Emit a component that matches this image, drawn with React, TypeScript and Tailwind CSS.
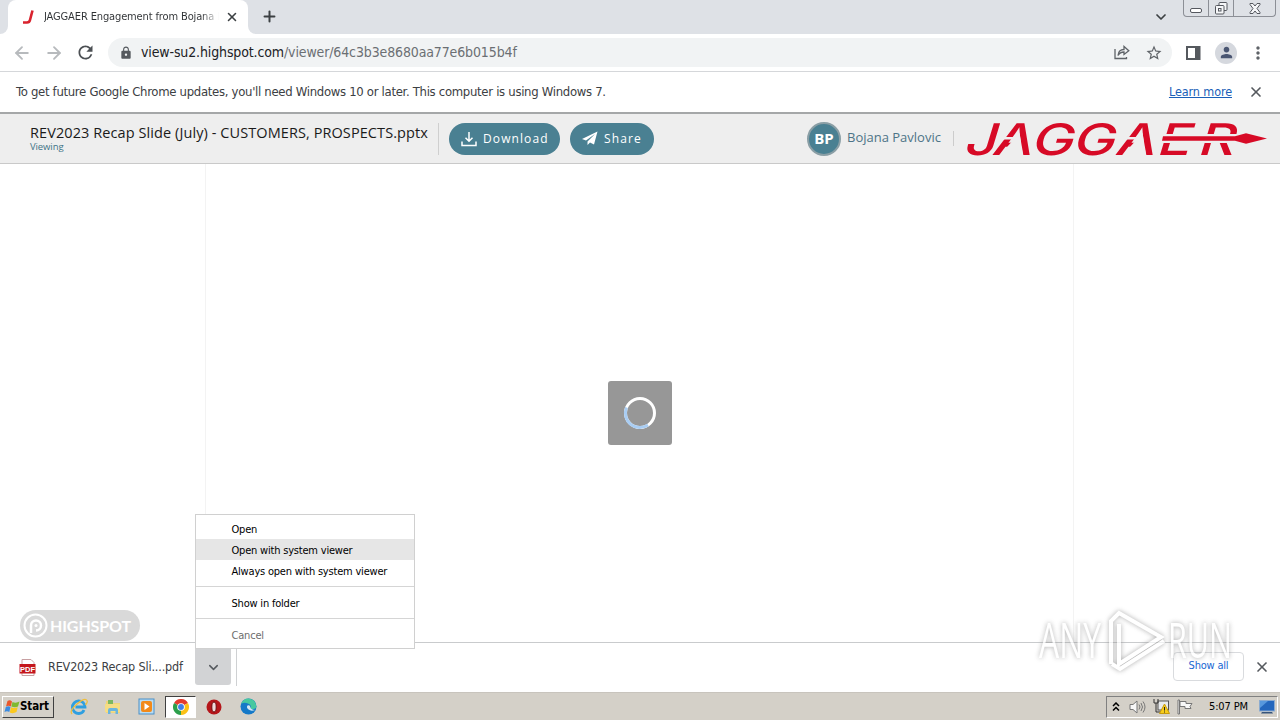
import React from 'react';
import { ChevronDown, X, Plus, ArrowLeft, ArrowRight } from 'lucide-react';
import { MdRefresh, MdLock, MdStarBorder, MdPerson, MdMoreVert } from 'react-icons/md';

// window buttons in the top right corner
const WindowButtons = () => {
  return (
    <div className="flex h-[17px] w-[93px] rounded-b-[4px] border border-t-0 border-[#8c8f96] text-[#4c5058]">
      <div className="flex w-[25px] items-end justify-center border-r border-[#8c8f96] pb-[3px]">
        <div className="h-[5px] w-[12px] rounded-[2px] border border-[#55585f] bg-white"></div>
      </div>
      <div className="flex w-[25px] items-center justify-center border-r border-[#8c8f96]">
        <svg width="13" height="13" viewBox="0 0 13 13" fill="#f5f6f8" stroke="#55585f">
          <rect x="4" y="0.5" width="8" height="8" rx="1" />
          <rect x="0.5" y="3.5" width="8.5" height="8.5" rx="1" />
          <rect x="3.5" y="6.5" width="2.5" height="2.5" />
        </svg>
      </div>
      <div className="flex flex-1 items-center justify-center">
        <svg width="12" height="11" viewBox="0 0 12 11" fill="#f5f6f8" stroke="#55585f">
          <path d="M1 .5h3L6 3l2-2.5h3v1L8 5.500l3 4v1H8L6 8l-2 2.500H1v-1l3-4-3-4z" />
        </svg>
      </div>
    </div>
  );
};

const TabStrip = () => {
  return (
    <div className="flex h-[34px] items-start bg-[#dee1e6]">
      <div className="flex h-full w-2 items-end bg-white">
        <div className="h-full w-2 rounded-br-[8px] bg-[#dee1e6]"></div>
      </div>
      <div className="flex h-full w-[240px] items-center rounded-t-[8px] bg-white pl-[14px] pr-[10px]">
        <svg width="13" height="14" viewBox="0 0 13 14" className="shrink-0">
          <path d="M10.500 0.500L8 10Q7.500 12.500 5 12.500H1" fill="none" stroke="#d9232e" strokeWidth="2.600" />
        </svg>
        <div className="ml-[9px] w-[175px] shrink-0 overflow-hidden whitespace-nowrap bg-gradient-to-r from-[#2f3235] from-90% to-transparent bg-clip-text text-[11px] tracking-[-0.130px] text-transparent">
          JAGGAER Engagement from Bojana P
        </div>
        <X size={14} strokeWidth={2.7} className="ml-[6px] shrink-0 text-[#3c4043]" />
      </div>
      <div className="flex h-full w-2 bg-white">
        <div className="h-full w-2 rounded-bl-[8px] bg-[#dee1e6]"></div>
      </div>
      <Plus size={17} strokeWidth={2.8} className="ml-[5px] mt-[8px] text-[#3c4043]" />
      <div className="flex-1"></div>
      <ChevronDown size={16} strokeWidth={2.6} className="mr-[14px] mt-[9px] text-[#3c4043]" />
      <WindowButtons />
      <div className="w-[4px]"></div>
    </div>
  );
};

const Toolbar = () => {
  return (
    <div className="flex h-[38px] items-center border-b border-[#d5d7da] bg-white text-[#5f6368]">
      <ArrowLeft size={20} strokeWidth={2.2} className="ml-[12px] text-[#b7babd]" />
      <ArrowRight size={20} strokeWidth={2.2} className="ml-[12px] text-[#b7babd]" />
      <MdRefresh size={21} className="ml-[11px] text-[#4c5054]" />
      <div className="ml-[12px] flex h-[29px] w-[1064px] items-center rounded-full bg-[#f1f3f4] pl-[11px] pr-[9px]">
        <MdLock size={14} className="text-[#55595e]" />
        <div className="ml-[8px] whitespace-nowrap text-[14px] tracking-[-0.130px] text-[#202124]">
          view-su2.highspot.com<span className="text-[#6b6f73]">/viewer/64c3b3e8680aa77e6b015b4f</span>
        </div>
        <div className="flex-1"></div>
        <svg width="16" height="15" viewBox="0 0 16 15" fill="none" stroke="#5f6368" strokeWidth="1.300">
          <path d="M1 4v9.500h11.500V12" />
          <path d="M4 10.500Q4.500 4.500 10 4.500V1.500L14.800 5.800 10 9.500V7Q6 7 4 10.500z" />
        </svg>
        <MdStarBorder size={18} className="ml-[15px]" />
      </div>
      <svg width="15" height="14" viewBox="0 0 15 14" className="ml-[14px]">
        <rect x="1" y="1" width="12.500" height="12" fill="none" stroke="#55595e" strokeWidth="2" />
        <rect x="9" y="1" width="5" height="12" fill="#55595e" />
      </svg>
      <div className="ml-[14px] flex size-[22px] items-center justify-center rounded-full bg-[#d5d8de]">
        <MdPerson size={17} className="text-[#4a5672]" />
      </div>
      <MdMoreVert size={20} className="ml-[11px]" />
    </div>
  );
};

const InfoBar = () => {
  return (
    <div className="flex h-[40px] items-center bg-white pl-4 text-[13px] text-[#3c4043]">
      <span className="whitespace-nowrap tracking-[-0.307px]">
        To get future Google Chrome updates, you'll need Windows 10 or later. This computer is using Windows 7.
      </span>
      <div className="flex-1"></div>
      <span className="whitespace-nowrap text-[12.500px] tracking-[-0.1px] text-[#1a5fb8] underline">Learn more</span>
      <X size={16} strokeWidth={2.5} className="ml-[16px] mr-[16px] text-[#55595e]" />
    </div>
  );
};

// brand wordmark with the arrow running through the last letters
const BrandLogo = () => {
  return (
    <svg width="300" height="36" viewBox="0 0 300 36" className="ml-[15px] shrink-0 overflow-visible">
      <text
        transform="translate(0 34) skewX(-17) scale(1.300 1)"
        x="-5 17 46.500 78.500 111.600 143.500 175"
        y="0"
        fill="#d70a26"
        fontFamily="Inter"
        fontWeight="500"
        fontSize="43.500"
      >
        JAGGAER
      </text>
      {/* open up the two A shapes */}
      <path d="M50.500 12L30 35H54.500zM173.500 12L153 35H177.500z" fill="#eeeeee" />
      <path d="M31 16H48V18.500H31zM154 16H171V18.500H154z" fill="#eeeeee" />
      <path d="M190 13H270V22H190z" fill="#eeeeee" />
      <path d="M194 15.200H266L277 12.300 298 17.500 277 22.700 266 19.800H193z" fill="#d70a26" />
    </svg>
  );
};

const ViewerHeader = () => {
  return (
    <div className="flex h-[52px] items-center border-b border-t-2 border-b-[#c9c9c9] border-t-[#a5a7a8] bg-[#eeeeee] pl-[30px] font-[Open_Sans]">
      <div className="w-[408px] whitespace-nowrap">
        <div className="text-[14.500px] leading-[17px] tracking-[0.085px] text-[#1a1a1a]">
          REV2023 Recap Slide (July) - CUSTOMERS, PROSPECTS.pptx
        </div>
        <div className="text-[9.500px] leading-[12px] tracking-[-0.1px] text-[#3f7487]">Viewing</div>
      </div>
      <div className="h-[32px] w-px bg-[#cfcfcf]"></div>
      <button className="ml-[10px] flex h-[32px] w-[111px] items-center rounded-full bg-[#4a8092] pl-[12px] text-white">
        <svg width="16" height="16" viewBox="0 0 16 16" fill="none" stroke="#fff" strokeWidth="1.500">
          <path d="M8 1v9M4.500 6.800L8 10.300l3.500-3.500M1 10.500v4h14v-4" />
        </svg>
        <span className="ml-[6px] text-[12px] font-medium tracking-[1.100px]">Download</span>
      </button>
      <button className="ml-[10px] flex h-[32px] w-[84px] items-center rounded-full bg-[#4a8092] pl-[12px] text-white">
        <svg width="16" height="15" viewBox="0 0 16 15" fill="#fff">
          <path d="M15.500 0.500L0 8l4 1.500L13 3 5.500 10.500V14l2.500-2.500 4 2z" />
        </svg>
        <span className="ml-[6px] text-[12px] font-medium tracking-[1.100px]">Share</span>
      </button>
      <div className="ml-[153px] flex size-[34px] shrink-0 items-center justify-center rounded-full border-2 border-[#8a9ea5] bg-[#4a8092] text-[15px] font-bold text-white">
        BP
      </div>
      <span className="ml-[6px] w-[94px] shrink-0 whitespace-nowrap pb-px text-[13px] text-[#4d7487]">Bojana Pavlovic</span>
      <div className="ml-[12px] h-[15px] w-px shrink-0 bg-[#cccccc]"></div>
      <BrandLogo />
    </div>
  );
};

const Stage = () => {
  return (
    <div className="relative h-[478px] bg-white">
      <div className="ml-[205px] flex h-full w-[869px] items-center justify-center border-x border-[#f3f3f3]">
        <div className="mt-[20px] flex size-[64px] items-center justify-center rounded-[3px] bg-[#979797]">
          <svg width="34" height="34" viewBox="0 0 34 34" fill="none" strokeWidth="3">
            <circle cx="17" cy="17" r="14.500" stroke="#fff" />
            <path d="M3.500 11.500A14.500 14.500 0 0 0 25 29.100" stroke="#a9cdf3" />
          </svg>
        </div>
      </div>
      <div className="absolute bottom-px left-[20px] flex h-[31px] w-[120px] items-center rounded-full bg-[#d9d9d9] pl-[3px]">
        <svg width="25" height="25" viewBox="0 0 25 25" fill="none" stroke="#fff" strokeWidth="2">
          <circle cx="12.500" cy="12.500" r="11" />
          <path d="M8 20V12.500A5 5 0 1 1 13 17.500" strokeWidth="2.500" />
          <circle cx="13" cy="12.500" r="1.500" fill="#fff" stroke="none" />
        </svg>
        <span className="ml-[2px] font-[Lato] text-[16px] font-bold tracking-[-0.1px] text-white">
          HIGHSPOT
        </span>
      </div>
    </div>
  );
};

const DownloadMenu = () => {
  return (
    <div className="absolute bottom-[36px] left-0 w-[220px] border border-[#d0d0d0] bg-white pb-[3px] pt-[3px] text-[11px] leading-[23px] tracking-[-0.2px] text-black">
      <div className="h-[21px] pl-[35.500px]">Open</div>
      <div className="h-[21px] bg-[#e6e6e6] pl-[35.500px]">Open with system viewer</div>
      <div className="h-[21px] pl-[35.500px]">Always open with system viewer</div>
      <div className="my-[5px] h-px bg-[#d5d5d5]"></div>
      <div className="h-[21px] pl-[35.500px]">Show in folder</div>
      <div className="my-[5px] h-px bg-[#d5d5d5]"></div>
      <div className="h-[21px] pl-[35.500px] text-[#6d6d6d]">Cancel</div>
    </div>
  );
};

const DownloadBar = () => {
  return (
    <div className="flex h-[50px] items-center border-t border-[#c9cbcd] bg-white pb-px">
      <svg width="17" height="17" viewBox="0 0 17 17" className="ml-[19px]">
        <path d="M3 .5h9l3 3v13H3z" fill="#fff" stroke="#c7a0a2" />
        <rect x="0.500" y="5" width="16" height="9.500" fill="#c4161c" />
        <text x="8.500" y="12.500" textAnchor="middle" fill="#fff" fontFamily="Liberation Sans" fontWeight="bold" fontSize="7.500">
          PDF
        </text>
      </svg>
      <span className="ml-[12px] w-[147px] whitespace-nowrap text-[12.500px] tracking-[-0.160px] text-[#3c4043]">
        REV2023 Recap Sli....pdf
      </span>
      <div className="relative flex h-[36px] w-[36px] items-center justify-center rounded-b-[3px] bg-[#d2d3d5]">
        <ChevronDown size={15} strokeWidth={2.3} className="text-[#55595e]" />
        <DownloadMenu />
      </div>
      <div className="ml-[5px] h-[38px] w-px bg-[#cfd1d3]"></div>
      <div className="flex-1"></div>
      <button className="mb-px h-[29px] w-[71px] rounded-[4px] border border-[#d9dbde] bg-white text-[11px] tracking-[-0.2px] text-[#1a67d2]">
        Show all
      </button>
      <X size={16} strokeWidth={2.5} className="ml-[10px] mr-[10px] text-[#55595e]" />
    </div>
  );
};

const Watermark = () => {
  return (
    <svg
      width="204"
      height="70"
      viewBox="-2 -2 204 70"
      className="absolute left-[1034px] top-[605px] drop-shadow-[0_0_2.5px_#888888]"
      fill="#ffffff"
      fontFamily="Open Sans"
      fontWeight="400"
      fontSize="49"
      opacity="0.700"
    >
      <text x="3" y="51" textLength="62" lengthAdjust="spacingAndGlyphs">ANY</text>
      <path d="M75 57V14l8-8 42 24-42 27V17M76 57l8 5 44-28" fill="none" stroke="#fff" strokeWidth="4" />
      <text x="132" y="51" textLength="64" lengthAdjust="spacingAndGlyphs">RUN</text>
    </svg>
  );
};

const Taskbar = () => {
  return (
    <div className="flex h-[28px] items-center border-t border-[#c8c4bd] bg-[#d4d0c8] pl-[2px] pr-[2px]">
      <button className="flex h-[22px] w-[52px] items-center border border-b-[#404040] border-l-white border-r-[#404040] border-t-white pl-px text-[11.500px] font-bold tracking-[-0.1px] text-black">
        <svg width="16" height="16" viewBox="0 0 16 16" className="shrink-0">
          <path d="M3.500 2Q6 .5 8 2.500L6.800 7.500Q4.500 6 2 7.500z" fill="#e9572b" />
          <path d="M8.500 3Q12 4.500 15.500 2.500L14 7.500Q11 9 7.300 7.500z" fill="#7fb92f" />
          <path d="M1.800 8Q4.500 6.500 6.500 8L5.300 13Q3 11.500 .5 13z" fill="#3b8be0" />
          <path d="M7 8.200Q10 9.700 13.700 8.200L12.500 13Q9 15 5.800 13.500z" fill="#fbc81e" />
        </svg>
        <span>Start</span>
      </button>
      {/* internet explorer */}
      <svg width="18" height="18" viewBox="0 0 18 18" fill="none" className="ml-[16px]">
        <path d="M14 12Q12.500 15.500 9 15.500A6.300 6.300 0 1 1 15 9H5.500" stroke="#2f9fe0" strokeWidth="2.800" />
        <path d="M2 16Q-1 13 7 6T17 2.500Q18 4 15.500 7" stroke="#efbe3c" strokeWidth="1.300" />
      </svg>
      {/* file explorer */}
      <svg width="18" height="18" viewBox="0 0 18 18" className="ml-[16px]">
        <path d="M2 3h6l1 2h7v10H2z" fill="#f0d47a" />
        <path d="M4 2h5v4H4z" fill="#7cb860" />
        <path d="M1 6h15v8H1z" fill="#f5dd85" />
        <path d="M4 16v-4q0-2 2-2h6q2 0 2 2v4h-2.500v-3h-5v3z" fill="#6bb5dd" />
      </svg>
      {/* media player */}
      <svg width="18" height="18" viewBox="0 0 18 18" className="ml-[16px]">
        <rect x="1" y="1" width="15" height="15" fill="#b9dcf2" stroke="#4a90c8" />
        <rect x="3" y="3" width="11" height="11" rx="2" fill="#f28a1a" />
        <path d="M6.500 5l5 3.500-5 3.500z" fill="#fff" />
      </svg>
      <div className="ml-[9px] flex h-[22px] w-[31px] items-center justify-center border border-b-white border-l-[#404040] border-r-white border-t-[#404040] bg-white">
        <svg width="16" height="16" viewBox="0 0 18 18">
          <path d="M9 9L1.200 4.500A9 9 0 0 1 16.800 4.500z" fill="#e33b2e" />
          <path d="M9 9L16.800 4.500A9 9 0 0 1 9 18z" fill="#fbc116" />
          <path d="M9 9V18A9 9 0 0 1 1.200 4.500z" fill="#2c9f4b" />
          <circle cx="9" cy="9" r="4.300" fill="#fff" />
          <circle cx="9" cy="9" r="3.300" fill="#3f7fe8" />
        </svg>
      </div>
      {/* opera */}
      <svg width="16" height="16" viewBox="0 0 16 16" className="ml-[10px]">
        <circle cx="8" cy="8" r="7.500" fill="#b5161a" />
        <ellipse cx="8" cy="8" rx="2.200" ry="5" fill="#eedada" stroke="#6c0b0d" />
      </svg>
      {/* edge */}
      <svg width="17" height="17" viewBox="0 0 17 17" className="ml-[18px]">
        <circle cx="8.500" cy="8.500" r="8" fill="#1579c8" />
        <path d="M1 6Q4-.5 10 .7T16.500 9Q15 12 10.500 10.500 12 7 8 5.500T1 6z" fill="#46c8a0" />
        <path d="M7.500 7.500Q10 6.500 10.300 9T15 12Q11 13.500 8.500 11.500T7.500 7.500z" fill="#d4e9f2" />
      </svg>
      <div className="flex-1"></div>
      <div className="flex h-[22px] w-[172px] items-center border border-b-white border-l-[#808080] border-r-white border-t-[#808080] pl-[5px]">
        <svg width="8" height="10" viewBox="0 0 8 10" fill="none" stroke="#000" strokeWidth="1.500">
          <path d="M1 4l3-3 3 3M1 8.500l3-3 3 3" />
        </svg>
        <svg width="17" height="16" viewBox="0 0 17 16" fill="none" stroke="#777" className="ml-[9px]">
          <path d="M1 5.500h3L8 2v12L4 10.500H1z" fill="#f7f7f7" />
          <path d="M10 5.500q2 2.500 0 5M12 4q3 4 0 8M14 2.500q4 5.500 0 11" />
        </svg>
        <svg width="17" height="17" viewBox="0 0 17 17" fill="none" stroke="#555" className="ml-[7px]">
          <rect x="5" y="3" width="10.500" height="9" fill="#e8eaec" />
          <path d="M1 1v4h4V1M3 5v9h5" stroke="#333" />
          <path d="M11.500 6L16.500 15.500H6.500z" fill="#f8cd1b" stroke="#c79b0c" />
          <path d="M11.500 9v3.500M11.500 13.500v1" stroke="#222" />
        </svg>
        <svg width="16" height="16" viewBox="0 0 16 16" stroke="#777" fill="#f8f8f8" className="ml-[7px]">
          <path d="M1 1h1.500v14H1z" />
          <path d="M3 2.500h6v2h6l-2 3 1 2H8v-2H3z" />
        </svg>
        <span className="ml-[16px] whitespace-nowrap pt-px text-[11px] tracking-[-0.130px] text-black">5:07 PM</span>
        <svg width="16" height="14" viewBox="0 0 16 14" className="ml-[11px] shrink-0">
          <rect x="0.500" y="0.500" width="15" height="10.500" fill="#2467bd" stroke="#8babd0" />
          <path d="M1 1h8L1 8z" fill="#5798dd" />
          <path d="M3 12h10l1 1.500H2z" fill="#36547b" />
        </svg>
      </div>
    </div>
  );
};

const App: React.FC = () => {
  return (
    <div className="relative h-[720px] w-[1280px] overflow-hidden bg-white font-[family-name:'DejaVu_Sans_Condensed','Noto_Sans',sans-serif]">
      <TabStrip />
      <Toolbar />
      <InfoBar />
      <ViewerHeader />
      <Stage />
      <DownloadBar />
      <Taskbar />
      <Watermark />
    </div>
  );
};

export default App;
